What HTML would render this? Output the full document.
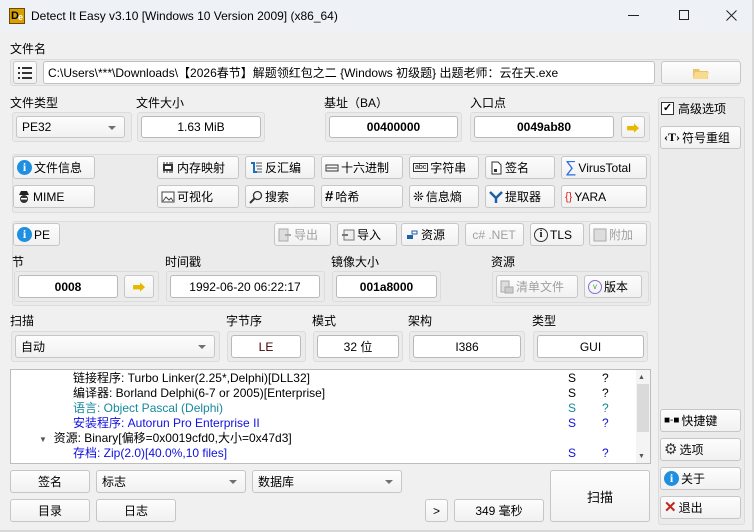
<!DOCTYPE html>
<html><head><meta charset="utf-8"><style>
*{box-sizing:border-box;margin:0;padding:0}
body{width:754px;height:532px;overflow:hidden;background:#f0f0f0;font-family:"Liberation Sans","Noto Sans CJK SC",sans-serif;font-size:12px;color:#000;position:relative}
.a{position:absolute}
.t{position:absolute;white-space:nowrap;line-height:14px}
.btn{position:absolute;background:linear-gradient(#fdfdfd,#f1f1f1);border:1px solid #c6c6c6;border-radius:3px;display:flex;align-items:center;justify-content:center;white-space:nowrap;font-size:12px;gap:2px}
.btn.l{justify-content:flex-start;padding-left:3px}
.dis{color:#a0a0a0}
.box{position:absolute;background:#fff;border:1px solid #b9b9b9;border-radius:3px;display:flex;align-items:center;justify-content:center;font-size:12px;white-space:nowrap}
.grp{position:absolute;border:1px solid #dcdcdc;border-radius:3px;background:#ebebeb}
.combo{position:absolute;background:linear-gradient(#fdfdfd,#f1f1f1);border:1px solid #c6c6c6;border-radius:3px;padding-left:5px;display:flex;align-items:center}
.combo:after{content:"";position:absolute;right:8px;top:9px;border-left:4px solid transparent;border-right:4px solid transparent;border-top:4px solid #707070}
b{font-weight:bold}
.ic{display:inline-block;width:14px;height:14px;flex:none}
.i{width:15px;height:15px;border-radius:50%;background:#1f8fe0;color:#fff;font:bold 12px/15px "Liberation Serif",serif;text-align:center;display:inline-block}
.arr{color:#e6b800;font-size:13px}
.row{position:absolute;left:0;height:15px;line-height:15px;white-space:nowrap}
</style></head><body>
<div class="a" style="left:0;top:0;width:754px;height:31px;background:#eef2f7"></div>
<div class="a" style="top:8px;left:9px;width:16px;height:16px;background:#d9a000;border:1px solid #6b4b00"><span style="position:absolute;left:1px;top:0;font:bold 11px/14px 'Liberation Sans';color:#000">D</span><span style="position:absolute;left:8px;top:3px;font:bold 9px/11px 'Liberation Sans';color:#fff">e</span></div>
<div class="t" style="left:31px;top:9px;font-size:12px">Detect It Easy v3.10 [Windows 10 Version 2009] (x86_64)</div>
<div class="a" style="left:628px;top:15px;width:11px;height:1px;background:#222"></div>
<div class="a" style="left:679px;top:10px;width:10px;height:10px;border:1px solid #222"></div>
<svg class="a" style="left:726px;top:10px" width="11" height="11"><path d="M0.5 0.5L10.5 10.5M10.5 0.5L0.5 10.5" stroke="#222" stroke-width="1"/></svg>
<div class="a" style="left:752px;top:0;width:2px;height:532px;background:#d8d8d8"></div>
<div class="a" style="left:0;top:530px;width:754px;height:2px;background:#d8d8d8"></div>

<div class="t" style="left:10px;top:42px">文件名</div>
<div class="grp" style="left:10px;top:59px;width:730px;height:27px"></div>
<div class="btn" style="left:13px;top:61px;width:24px;height:23px"><svg width="14" height="12"><g fill="#333"><rect x="0" y="0" width="2" height="2"/><rect x="4" y="0" width="10" height="2"/><rect x="0" y="5" width="2" height="2"/><rect x="4" y="5" width="10" height="2"/><rect x="0" y="10" width="2" height="2"/><rect x="4" y="10" width="10" height="2"/></g></svg></div>
<div class="box" style="left:43px;top:61px;width:612px;height:23px;justify-content:flex-start;padding-left:4px;border-color:#c0c0c0">C:\Users\***\Downloads\【2026春节】解题领红包之二 {Windows 初级题} 出题老师：云在天.exe</div>
<div class="btn" style="left:661px;top:61px;width:80px;height:23px"><svg width="16" height="12"><path d="M0 2h6l1 2h8v8H0z" fill="#e9c46a"/><path d="M2 5h14l-2 7H0z" fill="#f7dc8f"/></svg></div>

<div class="t" style="left:10px;top:96px">文件类型</div>
<div class="t" style="left:136px;top:96px">文件大小</div>
<div class="t" style="left:324px;top:96px">基址（BA）</div>
<div class="t" style="left:470px;top:96px">入口点</div>
<div class="grp" style="left:12px;top:112px;width:120px;height:30px"></div>
<div class="combo" style="left:16px;top:116px;width:109px;height:22px">PE32</div>
<div class="grp" style="left:137px;top:112px;width:128px;height:30px"></div>
<div class="box" style="left:141px;top:116px;width:120px;height:22px">1.63 MiB</div>
<div class="grp" style="left:325px;top:112px;width:137px;height:30px"></div>
<div class="box" style="left:329px;top:116px;width:129px;height:22px"><b>00400000</b></div>
<div class="grp" style="left:470px;top:112px;width:180px;height:30px"></div>
<div class="box" style="left:474px;top:116px;width:140px;height:22px"><b>0049ab80</b></div>
<div class="btn" style="left:621px;top:116px;width:24px;height:22px"><span class="arr">➡</span></div>

<div class="grp" style="left:658px;top:97px;width:87px;height:428px"></div>
<div class="a" style="left:661px;top:102px;width:13px;height:13px;background:#fff;border:1px solid #333;font:bold 11px/11px sans-serif;text-align:center">✓</div>
<div class="t" style="left:678px;top:102px">高级选项</div>
<div class="btn l" style="left:660px;top:126px;width:81px;height:23px"><span style="font:bold 12px 'Liberation Serif'">‹T›</span>符号重组</div>

<div class="grp" style="left:12px;top:154px;width:639px;height:59px"></div>
<div class="btn l" style="left:13px;top:156px;width:82px;height:23px"><span class="i">i</span>文件信息</div>
<div class="btn l" style="left:157px;top:156px;width:82px;height:23px"><svg class="ic" viewBox="0 0 14 14"><rect x="2" y="3" width="10" height="7" fill="#333"/><rect x="4" y="5" width="6" height="3" fill="#fff"/><path d="M3 1v2M6 1v2M9 1v2M11 1v2M3 10v2M6 10v2M9 10v2M11 10v2" stroke="#333"/></svg>内存映射</div>
<div class="btn l" style="left:245px;top:156px;width:70px;height:23px"><svg class="ic" viewBox="0 0 14 14"><path d="M2 2h3v9h3" stroke="#1d6fc0" stroke-width="2" fill="none"/><path d="M7 2h6M7 5h6M8 8h5M8 11h5" stroke="#555"/></svg>反汇编</div>
<div class="btn l" style="left:321px;top:156px;width:82px;height:23px"><svg class="ic" viewBox="0 0 14 14"><rect x="1" y="4" width="12" height="6" fill="none" stroke="#333"/><path d="M3 6v2M5 6v2M7 6v2M9 6v2M11 6v2" stroke="#333"/></svg>十六进制</div>
<div class="btn l" style="left:409px;top:156px;width:70px;height:23px"><span style="font-size:7px;border:1px solid #333;padding:0 1px">abc</span>字符串</div>
<div class="btn l" style="left:485px;top:156px;width:70px;height:23px"><svg class="ic" viewBox="0 0 14 14"><path d="M3 1h6l3 3v9H3z" fill="#fff" stroke="#333"/><rect x="5" y="8" width="3" height="3" fill="#333"/></svg> 签名</div>
<div class="btn l" style="left:561px;top:156px;width:86px;height:23px"><span style="color:#2b6fe0;font-size:16px;line-height:14px">∑</span>VirusTotal</div>
<div class="btn l" style="left:13px;top:185px;width:82px;height:23px"><svg class="ic" viewBox="0 0 14 14"><path d="M2 5h10L10 1H4z" fill="#222"/><circle cx="7" cy="9" r="4" fill="#333"/><rect x="4" y="8" width="6" height="1.5" fill="#fff"/></svg>MIME</div>
<div class="btn l" style="left:157px;top:185px;width:82px;height:23px"><svg class="ic" viewBox="0 0 14 14"><rect x="1" y="2" width="12" height="10" fill="#fff" stroke="#444"/><path d="M2 11l3-4 3 3 2-2 2 3" stroke="#444" fill="none"/></svg>可视化</div>
<div class="btn l" style="left:245px;top:185px;width:70px;height:23px"><svg class="ic" viewBox="0 0 14 14"><circle cx="8.5" cy="5.5" r="4" fill="none" stroke="#333" stroke-width="1.3"/><path d="M6 8L1 13" stroke="#333" stroke-width="2"/></svg>搜索</div>
<div class="btn l" style="left:321px;top:185px;width:82px;height:23px"><span style="font-weight:bold;font-size:15px;line-height:14px">#</span>哈希</div>
<div class="btn l" style="left:409px;top:185px;width:70px;height:23px"><span style="font-size:13px">❊</span>信息熵</div>
<div class="btn l" style="left:485px;top:185px;width:70px;height:23px"><svg class="ic" viewBox="0 0 14 14"><path d="M1 2l6 6 6-6M7 8v5" stroke="#1d5fa8" stroke-width="2.5" fill="none"/></svg>提取器</div>
<div class="btn l" style="left:561px;top:185px;width:86px;height:23px"><span style="color:#d22;font-size:11px">{}</span> YARA</div>

<div class="grp" style="left:12px;top:221px;width:639px;height:85px"></div>
<div class="btn l" style="left:13px;top:223px;width:47px;height:23px"><span class="i">i</span>PE</div>
<div class="btn l dis" style="left:274px;top:223px;width:57px;height:23px"><svg class="ic" viewBox="0 0 14 14"><rect x="1" y="1" width="9" height="12" fill="#ddd" stroke="#aaa"/><path d="M7 7h6" stroke="#aaa" stroke-width="2"/></svg>导出</div>
<div class="btn l" style="left:337px;top:223px;width:60px;height:23px"><svg class="ic" viewBox="0 0 14 14"><rect x="3" y="2" width="10" height="10" fill="#eee" stroke="#777"/><path d="M1 7h6" stroke="#777" stroke-width="2"/></svg>导入</div>
<div class="btn l" style="left:401px;top:223px;width:58px;height:23px"><svg class="ic" viewBox="0 0 14 14"><rect x="2" y="7" width="6" height="4" fill="#1d5fa8"/><rect x="7" y="3" width="5" height="3" fill="none" stroke="#1d5fa8"/></svg>资源</div>
<div class="btn l dis" style="left:465px;top:223px;width:59px;height:23px">&nbsp;c# .NET</div>
<div class="btn l" style="left:530px;top:223px;width:54px;height:23px"><span style="display:inline-block;width:14px;height:14px;border:1px solid #333;border-radius:50%;font:bold 10px/12px 'Liberation Serif';text-align:center">i</span>TLS</div>
<div class="btn l dis" style="left:589px;top:223px;width:58px;height:23px"><svg class="ic" viewBox="0 0 14 14"><rect x="1" y="1" width="12" height="12" fill="#ddd" stroke="#aaa"/></svg>附加</div>

<div class="t" style="left:12px;top:255px">节</div>
<div class="t" style="left:165px;top:255px">时间戳</div>
<div class="t" style="left:331px;top:255px">镜像大小</div>
<div class="t" style="left:491px;top:255px">资源</div>
<div class="grp" style="left:14px;top:271px;width:145px;height:31px"></div>
<div class="box" style="left:18px;top:275px;width:100px;height:23px"><b>0008</b></div>
<div class="btn" style="left:124px;top:275px;width:30px;height:23px"><span class="arr">➡</span></div>
<div class="grp" style="left:166px;top:271px;width:159px;height:31px"></div>
<div class="box" style="left:170px;top:275px;width:150px;height:23px">1992-06-20 06:22:17</div>
<div class="grp" style="left:332px;top:271px;width:109px;height:31px"></div>
<div class="box" style="left:336px;top:275px;width:101px;height:23px"><b>001a8000</b></div>
<div class="grp" style="left:492px;top:271px;width:157px;height:32px"></div>
<div class="btn l dis" style="left:496px;top:275px;width:82px;height:23px"><svg class="ic" viewBox="0 0 14 14"><rect x="1" y="1" width="8" height="11" fill="#ddd" stroke="#aaa"/><rect x="5" y="7" width="8" height="6" fill="#ccc" stroke="#aaa"/></svg>清单文件</div>
<div class="btn l" style="left:584px;top:275px;width:58px;height:23px"><span style="display:inline-block;width:14px;height:14px;border:1px solid #8a6be0;border-radius:50%;font-size:8px;line-height:12px;text-align:center;color:#3a3">v</span>版本</div>

<div class="t" style="left:10px;top:314px">扫描</div>
<div class="t" style="left:226px;top:314px">字节序</div>
<div class="t" style="left:312px;top:314px">模式</div>
<div class="t" style="left:408px;top:314px">架构</div>
<div class="t" style="left:532px;top:314px">类型</div>
<div class="grp" style="left:11px;top:331px;width:209px;height:31px"></div>
<div class="combo" style="left:15px;top:335px;width:200px;height:23px">自动</div>
<div class="grp" style="left:227px;top:331px;width:79px;height:31px"></div>
<div class="box" style="left:231px;top:335px;width:70px;height:23px;color:#400">LE</div>
<div class="grp" style="left:313px;top:331px;width:90px;height:31px"></div>
<div class="box" style="left:317px;top:335px;width:82px;height:23px">32 位</div>
<div class="grp" style="left:409px;top:331px;width:116px;height:31px"></div>
<div class="box" style="left:413px;top:335px;width:108px;height:23px">I386</div>
<div class="grp" style="left:533px;top:331px;width:115px;height:31px"></div>
<div class="box" style="left:537px;top:335px;width:107px;height:23px">GUI</div>

<div class="a" style="left:10px;top:369px;width:641px;height:95px;background:#fff;border:1px solid #bdbdbd">
 <div class="row" style="top:1px;left:62px">链接程序: Turbo Linker(2.25*,Delphi)[DLL32]</div>
 <div class="row" style="top:16px;left:62px">编译器: Borland Delphi(6-7 or 2005)[Enterprise]</div>
 <div class="row" style="top:31px;left:62px;color:#148a9c">语言: Object Pascal (Delphi)</div>
 <div class="row" style="top:46px;left:62px;color:#1010e0">安装程序: Autorun Pro Enterprise II</div>
 <div class="row" style="top:61px;left:28px"><span style="font-size:8px;color:#555">▼</span>&nbsp; 资源: Binary[偏移=0x0019cfd0,大小=0x47d3]</div>
 <div class="row" style="top:76px;left:62px;color:#1010e0">存档: Zip(2.0)[40.0%,10 files]</div>
 <div class="row" style="top:1px;left:557px">S</div><div class="row" style="top:1px;left:591px">?</div>
 <div class="row" style="top:16px;left:557px">S</div><div class="row" style="top:16px;left:591px">?</div>
 <div class="row" style="top:31px;left:557px;color:#148a9c">S</div><div class="row" style="top:31px;left:591px;color:#148a9c">?</div>
 <div class="row" style="top:46px;left:557px;color:#1010e0">S</div><div class="row" style="top:46px;left:591px;color:#1010e0">?</div>
 <div class="row" style="top:76px;left:557px;color:#1010e0">S</div><div class="row" style="top:76px;left:591px;color:#1010e0">?</div>
 <div class="a" style="left:625px;top:0;width:14px;height:93px;background:#f4f4f4"></div>
 <div class="a" style="left:626px;top:14px;width:12px;height:48px;background:#dadada"></div>
 <div class="t" style="left:627px;top:1px;font-size:7px;color:#555">▲</div>
 <div class="t" style="left:627px;top:80px;font-size:7px;color:#555">▼</div>
</div>

<div class="btn" style="left:10px;top:470px;width:80px;height:23px">签名</div>
<div class="combo" style="left:96px;top:470px;width:150px;height:23px">标志</div>
<div class="combo" style="left:252px;top:470px;width:150px;height:23px">数据库</div>
<div class="btn" style="left:10px;top:499px;width:80px;height:23px">目录</div>
<div class="btn" style="left:96px;top:499px;width:80px;height:23px">日志</div>
<div class="btn" style="left:425px;top:499px;width:23px;height:23px">&gt;</div>
<div class="btn" style="left:454px;top:499px;width:90px;height:23px">349 毫秒</div>
<div class="btn" style="left:550px;top:470px;width:100px;height:52px;font-size:13px">扫描</div>

<div class="btn l" style="left:660px;top:409px;width:81px;height:23px"><span style="font-size:10px">■-■</span>快捷键</div>
<div class="btn l" style="left:660px;top:438px;width:81px;height:23px"><span style="font-size:15px;color:#333;line-height:14px">⚙</span>选项</div>
<div class="btn l" style="left:660px;top:467px;width:81px;height:23px"><span class="i">i</span>关于</div>
<div class="btn l" style="left:660px;top:496px;width:81px;height:23px"><span style="color:#c0281e;font-weight:bold;font-size:15px;line-height:14px">✕</span>退出</div>
</body></html>
